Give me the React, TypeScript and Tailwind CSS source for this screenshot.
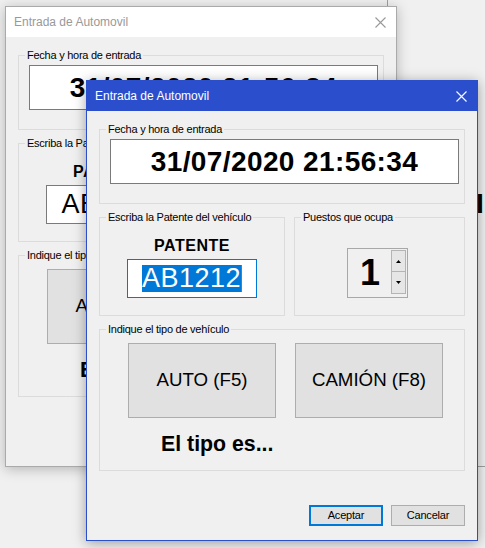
import React from "react";

const SANS = "font-['Liberation_Sans',Arial,sans-serif]";

function GroupBox({
  label,
  className,
  children,
}: {
  label: string;
  className?: string;
  children?: React.ReactNode;
}) {
  return (
    <div className={`relative border border-[#dcdcdc] ${className ?? ""}`}>
      <span className="absolute left-[6px] top-[-8px] bg-[#f0f0f0] px-[2px] text-[11px] leading-[14px] tracking-[-0.25px] text-black whitespace-nowrap">
        {label}
      </span>
      {children}
    </div>
  );
}

function CloseIcon({ color }: { color: string }) {
  return (
    <svg width="11" height="11" viewBox="0 0 11 11">
      <path d="M0.5 0.5 L10.5 10.5 M10.5 0.5 L0.5 10.5" stroke={color} strokeWidth="1.1" fill="none" />
    </svg>
  );
}

function Arrow({ up }: { up?: boolean }) {
  return (
    <svg width="5" height="3" viewBox="0 0 5 3">
      <path d={up ? "M2.5 0 L5 3 L0 3 Z" : "M0 0 L5 0 L2.5 3 Z"} fill="#000" />
    </svg>
  );
}

function Dialog({ active, className }: { active?: boolean; className: string }) {
  return (
    <div
      className={`absolute flex h-[461px] w-[392px] flex-col bg-[#f0f0f0] ${SANS} ${
        active
          ? "border border-[#2b4fcc] shadow-[0_2px_12px_rgba(0,0,0,0.35)]"
          : "border border-[#aaaaaa] shadow-[0_2px_12px_rgba(0,0,0,0.25)]"
      } ${className}`}
    >
      {/* title bar */}
      <div
        className={`flex h-[30px] shrink-0 items-center justify-between pl-[8px] pr-[10px] text-[12px] ${
          active ? "bg-[#2b4fcc] text-white" : "bg-white text-[#999999]"
        }`}
      >
        <span>Entrada de Automovil</span>
        <CloseIcon color={active ? "#ffffff" : "#999999"} />
      </div>

      {/* client */}
      <div className="flex flex-col px-[12px] pt-[18px]">
        <GroupBox label="Fecha y hora de entrada" className="h-[75px]">
          <div className="ml-[10px] mt-[9px] flex h-[45px] w-[349px] items-center justify-center border border-[#7a7a7a] bg-white text-[28px] font-bold tracking-[0.4px] text-black">
            31/07/2020 21:56:34
          </div>
        </GroupBox>

        <div className="mt-[13px] flex h-[99px] gap-[9px]">
          <GroupBox label="Escriba la Patente del vehículo" className="w-[186px]">
            <div className="flex flex-col items-center pt-[19px]">
              <span className="text-[16px] font-bold leading-[18px] tracking-[0.5px] text-black">
                PATENTE
              </span>
              <div
                className={`mt-[4px] flex h-[39px] w-[130px] items-center justify-center border bg-white ${
                  active ? "border-[#0078d7]" : "border-[#7a7a7a]"
                }`}
              >
                <span
                  className={`inline-block h-[27px] text-[27px] leading-[27px] tracking-[0.5px] ${
                    active ? "bg-[#0078d7] text-white" : "text-black"
                  }`}
                >
                  AB1212
                </span>
                {active && <span className="h-[27px] w-px bg-[#b06a20]" />}
              </div>
            </div>
          </GroupBox>

          <GroupBox label="Puestos que ocupa" className="flex-1">
            <div className="ml-[52px] mt-[30px] flex h-[50px] w-[61px] border border-[#a8a8a8] bg-[#f0f0f0]">
              <div className="flex flex-1 items-center justify-center pl-[1px] text-[36px] font-bold leading-none text-black">
                1
              </div>
              <div className="mr-[1px] mt-[1px] flex w-[15px] flex-col">
                <div className="flex h-[22px] items-center justify-center border border-[#b4b4b4] bg-[#e6e6e6]">
                  <Arrow up />
                </div>
                <div className="flex h-[22px] items-center justify-center border border-t-0 border-[#b4b4b4] bg-[#e6e6e6]">
                  <Arrow />
                </div>
              </div>
            </div>
          </GroupBox>
        </div>

        <GroupBox label="Indique el tipo de vehículo" className="mt-[13px] h-[142px]">
          <div className="ml-[28px] mt-[13px] flex gap-[19px]">
            <div className="flex h-[75px] w-[148px] items-center justify-center border border-[#adadad] bg-[#e1e1e1] text-[18.7px] text-black">
              AUTO (F5)
            </div>
            <div className="flex h-[75px] w-[148px] items-center justify-center border border-[#adadad] bg-[#e1e1e1] text-[18.7px] text-black">
              CAMIÓN (F8)
            </div>
          </div>
          <div className="ml-[61px] mt-[14px] text-[21.3px] font-bold leading-[24px] text-black">
            El tipo es...
          </div>
        </GroupBox>

        <div className="mt-[34px] flex justify-end gap-[8px]">
          <div
            className={`flex h-[21px] w-[74px] items-center justify-center bg-[#e1e1e1] text-[11px] tracking-[-0.2px] text-black ${
              active ? "border-2 border-[#0078d7]" : "border border-[#adadad]"
            }`}
          >
            Aceptar
          </div>
          <div className="flex h-[21px] w-[74px] items-center justify-center border border-[#adadad] bg-[#e1e1e1] text-[11px] tracking-[-0.2px] text-black">
            Cancelar
          </div>
        </div>
      </div>
    </div>
  );
}

export default function App() {
  return (
    <div className={`relative h-[548px] w-[485px] overflow-hidden bg-[#f0f0f0] ${SANS}`}>
      {/* bits of the form behind both dialogs */}
      <div className="absolute left-[387px] top-0 h-[8px] w-px bg-[#a0a0a0]" />
      <span className="absolute left-[476px] top-[190px] text-[28px] font-bold leading-none text-black">I</span>
      <div className="absolute left-[470px] top-[466px] h-px w-[15px] bg-[#a0a0a0]" />

      <Dialog className="left-[5px] top-[6px]" />
      <Dialog active className="left-[86px] top-[80px]" />
    </div>
  );
}
